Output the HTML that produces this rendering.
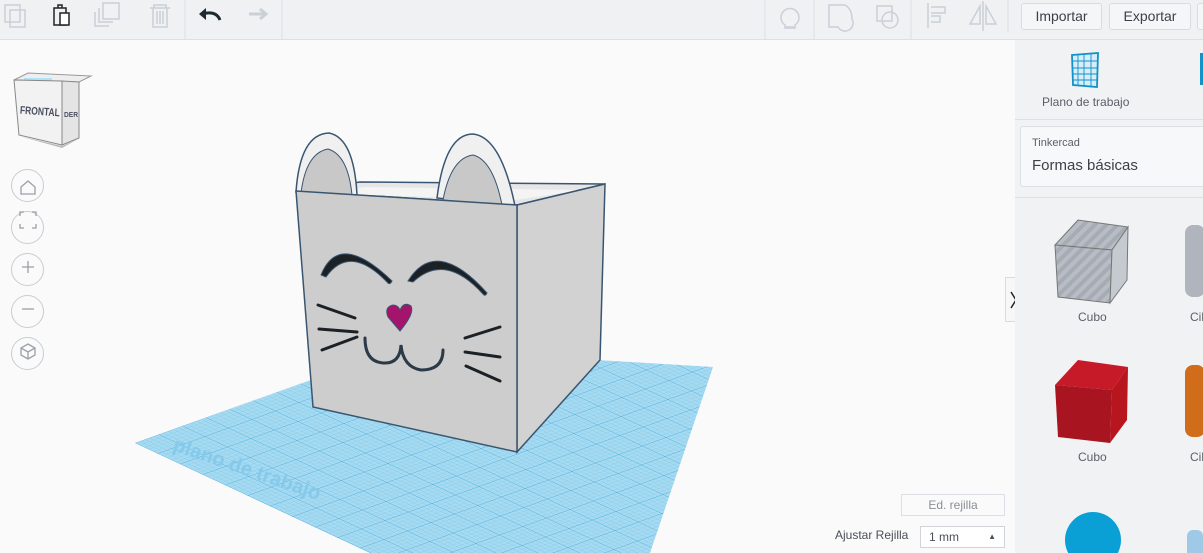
<!DOCTYPE html>
<html><head><meta charset="utf-8"><style>
*{margin:0;padding:0;box-sizing:border-box}
html,body{width:1203px;height:553px;overflow:hidden}
body{background:#fafafa;font-family:"Liberation Sans",sans-serif;position:relative}
.top{position:absolute;left:0;top:0;width:1203px;height:40px;background:#f0f1f3;border-bottom:1px solid #dcdfe3}
.btn{position:absolute;top:3px;height:27px;border:1px solid #d8dbe0;border-radius:3px;background:#f5f6f7;font-size:14px;color:#3c4049;line-height:25px;text-align:center}
.side{position:absolute;left:1015px;top:40px;width:188px;height:513px;background:#f1f2f4;overflow:hidden}
.nav{position:absolute;left:11px;width:33px;height:33px;border:1px solid #c9ccd1;border-radius:50%;background:#fafafa}
.lbl{position:absolute;font-size:12px;color:#5a5f69}
</style></head><body>
<div class="top">
<svg width="760" height="40" style="position:absolute;left:0;top:0">
 <g fill="none" stroke="#c9d0d8" stroke-width="1.5">
  <rect x="5" y="5" width="15" height="17"/><rect x="10" y="10" width="15" height="17"/>
  <rect x="103" y="3" width="16" height="16"/><path d="M99 8v14h14"/><path d="M95 12v14h14"/>
  <path d="M150 8h20M154 8v-3h12v3M153 8v19h14v-19M157 11v13M160 11v13M163 11v13"/>
  <path d="M249 14h17M260 9l6 5-6 5" stroke-width="3"/>
 </g>
 <g fill="none" stroke="#222" stroke-width="1.5"><rect x="54" y="8" width="12" height="17"/><rect x="60" y="13" width="9" height="12" fill="#fff"/><path d="M58 8v-3h4v3"/></g>
 <path d="M202 14 q14-4 18 6" stroke="#1e2a30" stroke-width="3" fill="none"/><path d="M199 14l7-6v12z" fill="#1e2a30"/>
 <line x1="185" y1="0" x2="185" y2="40" stroke="#dcdfe3"/><line x1="282" y1="0" x2="282" y2="40" stroke="#dcdfe3"/>
</svg>
<svg width="260" height="40" style="position:absolute;left:760px;top:0">
 <g fill="none" stroke="#c9d0d8" stroke-width="1.5">
  <path d="M25 25a9 9 0 1 1 10 0v3h-10z M26 27h8"/>
  <path d="M69 5h16q7 4 7 14a8 8 0 0 1-14 8h-9z"/>
  <rect x="117" y="6" width="15" height="15"/><circle cx="130" cy="20" r="8"/>
  <path d="M168 3v25M171 7h14v6h-14M171 16h9v6h-9"/>
  <path d="M223 1v30M220 6l-10 18h10zM226 6l10 18h-10z"/>
 </g>
 <g stroke="#dcdfe3"><line x1="5" y1="0" x2="5" y2="40"/><line x1="54" y1="0" x2="54" y2="40"/><line x1="151" y1="0" x2="151" y2="40"/><line x1="248" y1="0" x2="248" y2="32"/></g>
</svg>
<div class="btn" style="left:1021px;width:81px">Importar</div>
<div class="btn" style="left:1109px;width:82px">Exportar</div>
<div class="btn" style="left:1197px;width:10px"></div>
</div>

<svg width="1015" height="513" style="position:absolute;left:0;top:40px" viewBox="0 40 1015 513">
 <defs>
  <pattern id="g" width="5" height="5" patternUnits="userSpaceOnUse" patternTransform="matrix(0.94,-0.34,0.9,0.42,135,443)">
   <rect width="5" height="5" fill="#a6daf1"/><path d="M5 0H0V5" fill="none" stroke="#6cc0e6" stroke-width="0.6"/>
  </pattern>
  <pattern id="g2" width="25" height="25" patternUnits="userSpaceOnUse" patternTransform="matrix(0.94,-0.34,0.9,0.42,135,443)">
   <path d="M25 0H0V25" fill="none" stroke="#4aa9d8" stroke-width="0.9"/>
  </pattern>
 </defs>
 <polygon points="135,443 400,348 713,367 650,553 370,553" fill="url(#g)"/>
 <polygon points="135,443 400,348 713,367 650,553 370,553" fill="url(#g2)"/>
 <text x="172" y="450" font-size="20" fill="#86c9ea" font-weight="bold" transform="rotate(19 172 450)">plano de trabajo</text>
 <!-- cube -->
 <polygon points="296,191 360,182 605,184 517,205" fill="#e6e6e6" stroke="#3a5570" stroke-width="1.5"/>
 <polygon points="310,193 365,187 585,190 515,200" fill="#f4f4f4"/>
 <path d="M296 192 q4-58 33-59 q25 5 28 62 z" fill="#f0f0f0" stroke="#3a5570" stroke-width="1.5"/>
 <path d="M301 193 q5-40 27-44 q20 6 24 46z" fill="#c8c8c8" stroke="#3a5570"/>
 <path d="M437 198 q8-64 36-64 q28 3 42 72 z" fill="#f0f0f0" stroke="#3a5570" stroke-width="1.5"/>
 <path d="M443 200 q8-42 30-45 q20 5 29 50z" fill="#c8c8c8" stroke="#3a5570"/>
 <polygon points="517,205 605,184 600,360 517,452" fill="#d2d2d2" stroke="#3a5570" stroke-width="1.5"/>
 <polygon points="296,191 517,205 517,452 313,407" fill="#cdcdcd" stroke="#3a5570" stroke-width="1.5"/>
 <g fill="#1c2126" stroke="#3a5570" stroke-width="1">
  <path d="M321 275 q18-45 71 6 q-2 4-4 2 q-38-40-62-6 z"/>
  <path d="M408 281 q28-45 79 12 q-2 4-4 1 q-38-42-70-12 z"/>
 </g>
 <g fill="none" stroke="#1c2126" stroke-linecap="round">
  <path d="M318 305l37 13M319 329l38 3M322 350l35-13M465 338l35-11M465 352l35 5M466 366l34 15" stroke-width="3"/>
  <path d="M365 338 q0 25 20 25 q15 0 16-18 q2 22 20 25 q22 0 22-20" stroke-width="3" stroke="#2b3a48"/>
 </g>
 <path d="M400 331 l-12-14 q-4-10 5-12 q5 0 7 5 q4-9 11-4 q4 7-11 25z" fill="#a4146c" stroke="#3a5570" stroke-width="1"/>
 <!-- view cube -->
 <polygon points="14,80 28,73 91,76 79,82" fill="#eee" stroke="#999"/>
 <rect x="24" y="78" width="28" height="16" fill="#aee3fa"/>
 <polygon points="14,80 62,81 62,145 19,135" fill="#f2f2f2" stroke="#888"/>
 <polygon points="62,81 79,82 79,138 62,145" fill="#e4e4e4" stroke="#888"/>
 <polygon points="19,136 62,146 78,139 62,148" fill="#bbb"/>
 <text x="20" y="115" font-size="11" font-weight="bold" fill="#4a5060" transform="rotate(4 40 110)" textLength="40" lengthAdjust="spacingAndGlyphs">FRONTAL</text>
 <text x="64" y="117" font-size="7" font-weight="bold" fill="#4a5060" textLength="14" lengthAdjust="spacingAndGlyphs">DER</text>
</svg>
<div class="nav" style="top:169px"></div>
<div class="nav" style="top:211px"></div>
<div class="nav" style="top:253px"></div>
<div class="nav" style="top:295px"></div>
<div class="nav" style="top:337px"></div>
<svg width="40" height="210" style="position:absolute;left:8px;top:166px" fill="none" stroke="#9aa0a8" stroke-width="1.3">
 <path d="M13 21l7-6 7 6v7h-14z"/>
 <path d="M12 50v-4h4M24 46h4v4M28 58v4h-4M16 62h-4v-4"/>
 <path d="M20 95v12M14 101h12"/><path d="M14 143h12"/>
 <path d="M20 178l7 4v7l-7 4-7-4v-7zM13 182l7 4 7-4M20 186v7"/>
</svg>
<div style="position:absolute;left:1005px;top:277px;width:15px;height:45px;background:#f7f7f7;border:1px solid #d8dbe0;overflow:hidden">
 <svg width="13" height="43"><path d="M5 14l5 8-5 8" fill="none" stroke="#222" stroke-width="1.5"/></svg>
</div>
<div style="position:absolute;left:901px;top:494px;width:104px;height:22px;border:1px solid #dcdfe3;background:#fafafa;font-size:12px;color:#8a8f96;text-align:center;line-height:20px">Ed. rejilla</div>
<div style="position:absolute;left:835px;top:528px;font-size:12px;color:#4a4f58">Ajustar Rejilla</div>
<div style="position:absolute;left:920px;top:526px;width:85px;height:22px;border:1px solid #d0d3d8;background:#fff;font-size:12px;color:#4a4f58;line-height:20px;padding-left:8px">1 mm<span style="position:absolute;right:8px;font-size:8px">▲</span></div>

<div class="side">
 <svg width="40" height="40" style="position:absolute;left:52px;top:12px">
  <polygon points="5,3 31,1 30,35 6,33" fill="#d7eef9" stroke="#1192c9" stroke-width="1.8"/>
  <path d="M11 3v30M17 2v32M24 2v32M5 9h26M5 16h26M5 22h26M6 28h25" stroke="#1192c9" stroke-width="0.9"/>
 </svg>
 <div style="position:absolute;left:185px;top:13px;width:3px;height:32px;background:#1192c9"></div>
 <div class="lbl" style="left:27px;top:55px">Plano de trabajo</div>
 <div style="position:absolute;left:0;top:79px;width:188px;height:1px;background:#dcdfe3"></div>
 <div style="position:absolute;left:5px;top:86px;width:190px;height:61px;background:#f7f8f9;border:1px solid #dcdfe3;border-radius:3px">
  <div style="position:absolute;left:11px;top:10px;font-size:11px;color:#5a5f69">Tinkercad</div>
  <div style="position:absolute;left:11px;top:30px;font-size:15px;color:#3c4049">Formas básicas</div>
 </div>
 <div style="position:absolute;left:0;top:157px;width:188px;height:1px;background:#dcdfe3"></div>
 <svg width="188" height="353" style="position:absolute;left:0;top:160px">
  <defs><pattern id="s" width="8" height="8" patternUnits="userSpaceOnUse" patternTransform="rotate(45)"><rect width="8" height="8" fill="#b8bcc4"/><rect width="4" height="8" fill="#a7abb3"/></pattern></defs>
  <polygon points="40,45 63,20 113,27 97,50" fill="url(#s)" stroke="#777"/>
  <polygon points="40,45 97,50 95,103 43,97" fill="url(#s)" stroke="#777"/>
  <polygon points="97,50 113,27 112,80 95,103" fill="#c5c9d0" stroke="#777"/>
  <rect x="170" y="25" width="20" height="72" rx="8" fill="#b0b4bc"/>
  <polygon points="40,185 63,160 113,167 97,190" fill="#c61a28"/>
  <polygon points="40,185 97,190 95,243 43,237" fill="#a8141f"/>
  <polygon points="97,190 113,167 112,220 95,243" fill="#b8161f"/>
  <rect x="170" y="165" width="20" height="72" rx="8" fill="#d06c1a"/>
  <circle cx="78" cy="340" r="28" fill="#0aa0d6"/>
  <rect x="172" y="330" width="16" height="30" rx="6" fill="#9fc9e6"/>
 </svg>
 <div class="lbl" style="left:63px;top:270px">Cubo</div>
 <div class="lbl" style="left:175px;top:270px">Cil</div>
 <div class="lbl" style="left:63px;top:410px">Cubo</div>
 <div class="lbl" style="left:175px;top:410px">Cil</div>
</div>
</body></html>
